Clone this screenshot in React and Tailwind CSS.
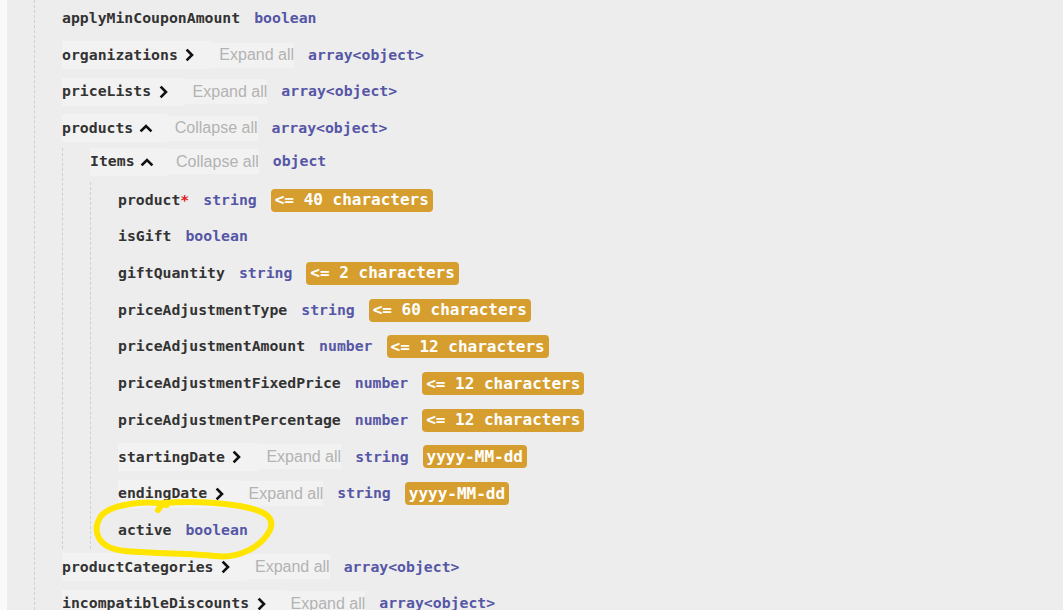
import React from 'react';

const mono = { fontFamily: '"DejaVu Sans Mono", "Liberation Mono", monospace' };

function Chevron({ open }) {
  return (
    <svg viewBox="0 0 16 16" className="w-4 h-4 ml-[4.5px] shrink-0" fill="none" stroke="#111" strokeWidth="2.6" strokeLinecap="square" strokeLinejoin="miter">
      {open ? <path d="M3.5 10.5 L8 6 L12.5 10.5" /> : <path d="M5.5 3.5 L10 8 L5.5 12.5" />}
    </svg>
  );
}

function Row({ name, required, toggle, open, type, badge }) {
  return (
    <div className="flex items-center h-[36.7px] gap-[14px] leading-none" style={mono}>
      {toggle ? (
        <div className="flex items-center">
          <div className="flex items-center h-[28px] pr-[13px] bg-[#f2f2f2] font-bold text-[14.8px] text-[#333]">
            {name}
            <Chevron open={open} />
          </div>
          <div className="flex items-center h-[25px] pl-2 bg-[#f2f2f2] text-[16px] text-[#b3b3b3] font-['Liberation_Sans',Arial,sans-serif]">
            {open ? 'Collapse all' : 'Expand all'}
          </div>
        </div>
      ) : (
        <div className="font-bold text-[14.8px] text-[#333]">
          {name}
          {required && <span className="text-[#e02020]">*</span>}
        </div>
      )}
      <span className="font-bold text-[14.8px] text-[#5656a6]">{type}</span>
      {badge && (
        <span className="flex items-center h-[23px] px-[4px] rounded-[4px] bg-[#d69e2e] text-white font-bold text-[16px]">
          {badge}
        </span>
      )}
    </div>
  );
}

const items = [
  { name: 'product', required: true, type: 'string', badge: '<= 40 characters' },
  { name: 'isGift', type: 'boolean' },
  { name: 'giftQuantity', type: 'string', badge: '<= 2 characters' },
  { name: 'priceAdjustmentType', type: 'string', badge: '<= 60 characters' },
  { name: 'priceAdjustmentAmount', type: 'number', badge: '<= 12 characters' },
  { name: 'priceAdjustmentFixedPrice', type: 'number', badge: '<= 12 characters' },
  { name: 'priceAdjustmentPercentage', type: 'number', badge: '<= 12 characters' },
  { name: 'startingDate', toggle: true, type: 'string', badge: 'yyyy-MM-dd' },
  { name: 'endingDate', toggle: true, type: 'string', badge: 'yyyy-MM-dd' },
  { name: 'active', type: 'boolean' },
];

export default function App() {
  return (
    <div className="relative flex h-[610px] w-full overflow-hidden bg-[#ededed]">
      <div className="w-[7px] shrink-0 bg-[#f9f9f9]" />
      <div className="flex-1 pl-[27px]">
        <div className="h-full border-l border-dashed border-[#cfcfcf] pl-[27px]">
          <Row name="applyMinCouponAmount" type="boolean" />
          <Row name="organizations" toggle type="array<object>" />
          <Row name="priceLists" toggle type="array<object>" />
          <Row name="products" toggle open type="array<object>" />
          <div className="border-l border-dashed border-[#cfcfcf] pl-[27px]">
            <div className="mt-[1px] flex items-center h-[28px] gap-[14px] leading-none" style={mono}>
              <div className="flex items-center">
                <div className="flex items-center h-[28px] pr-[13px] bg-[#f2f2f2] font-bold text-[14.8px] text-[#333]">
                  Items
                  <Chevron open />
                </div>
                <div className="flex items-center h-[25px] pl-2 bg-[#f2f2f2] text-[16px] text-[#b3b3b3] font-['Liberation_Sans',Arial,sans-serif]">
                  Collapse all
                </div>
              </div>
              <span className="font-bold text-[14.8px] text-[#5656a6]">object</span>
            </div>
            <div className="mt-[6px] border-l border-dashed border-[#cfcfcf] pl-[27px]">
              {items.map((it) => (
                <Row key={it.name} {...it} />
              ))}
            </div>
          </div>
          <Row name="productCategories" toggle type="array<object>" />
          <Row name="incompatibleDiscounts" toggle type="array<object>" />
        </div>
      </div>
      <svg className="absolute left-0 top-0 pointer-events-none" width="1063" height="610" fill="none">
        <path
          d="M167 505 C150 500, 112 503, 101 516 C92 530, 96 548, 125 551 C160 554, 190 553, 215 556 C240 559, 262 546, 270 530 C276 516, 262 510, 240 506 C215 502, 190 501, 163 503 L158 510"
          stroke="#ffe500"
          strokeWidth="6"
          strokeLinecap="round"
          strokeLinejoin="round"
        />
      </svg>
    </div>
  );
}
